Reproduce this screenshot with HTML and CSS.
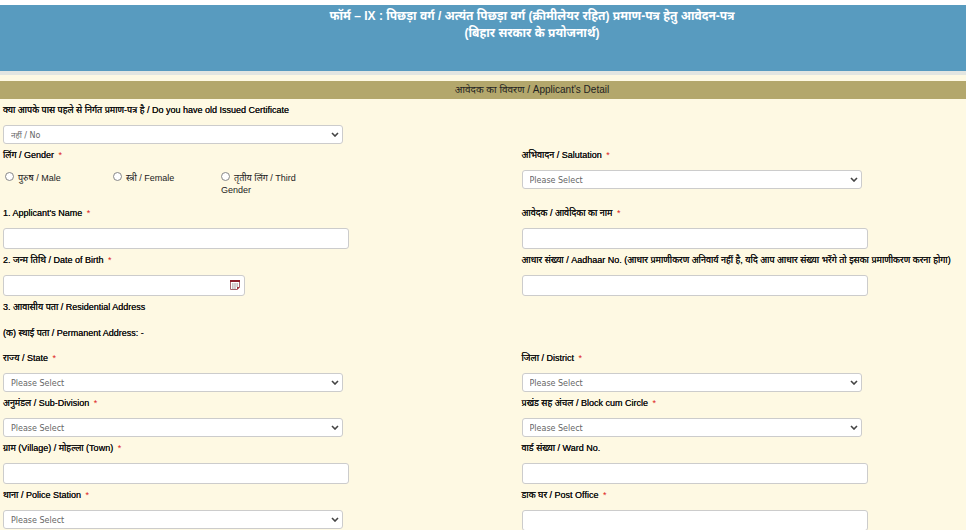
FILE: index.html
```html
<!DOCTYPE html>
<html lang="hi">
<head>
    <meta charset="UTF-8">
    <meta name="viewport" content="width=device-width, initial-scale=1.0">
    <title>Form IX</title>
    <link rel="stylesheet" href="styles.css">
</head>
<body>
    <div class="top-strip"></div>
    <header class="form-header">
        <h1>फॉर्म – IX : पिछड़ा वर्ग / अत्यंत पिछड़ा वर्ग (क्रीमीलेयर रहित) प्रमाण-पत्र हेतु आवेदन-पत्र<br>(बिहार सरकार के प्रयोजनार्थ)</h1>
    </header>
    <h2 class="section-title">आवेदक का विवरण / Applicant's Detail</h2>

    <form class="form">
        <div class="row">
            <div class="field">
                <label for="old-cert">क्या आपके पास पहले से निर्गत प्रमाण-पत्र है / Do you have old Issued Certificate</label>
                <select id="old-cert"><option>नहीं / No</option></select>
            </div>
        </div>
        <div class="row">
            <div class="field" role="radiogroup" aria-labelledby="gender-label">
                <span class="label" id="gender-label">लिंग / Gender <span class="req">*</span></span>
                <div class="radios">
                    <label><input type="radio" name="gender">पुरुष / Male</label>
                    <label><input type="radio" name="gender">स्त्री / Female</label>
                    <label><input type="radio" name="gender">तृतीय लिंग / Third Gender</label>
                </div>
            </div>
            <div class="field">
                <label for="salutation">अभिवादन / Salutation <span class="req">*</span></label>
                <select id="salutation"><option>Please Select</option></select>
            </div>
        </div>
        <div class="row">
            <div class="field">
                <label for="name-en">1. Applicant's Name <span class="req">*</span></label>
                <input type="text" id="name-en">
            </div>
            <div class="field">
                <label for="name-hi">आवेदक / आवेदिका का नाम <span class="req">*</span></label>
                <input type="text" id="name-hi">
            </div>
        </div>
        <div class="row">
            <div class="field">
                <label for="dob">2. जन्म तिथि / Date of Birth <span class="req">*</span></label>
                <div class="date-box">
                    <input type="text" id="dob">
                    <svg class="calendar" viewBox="0 0 10 10" aria-hidden="true">
                        <path d="M0.5 1.5V9.5H7L9.5 7V1.5Z" fill="#fff" stroke="#a5646c"/>
                        <path d="M0 0H10V2H0Z" fill="#8c1f2b"/>
                        <path d="M2 4H8M2 6H8M2 8H6" stroke="#8f8388" stroke-dasharray="1.6 0.6"/>
                        <path d="M7 10V7H10Z" fill="#a3313c"/>
                    </svg>
                </div>
            </div>
            <div class="field">
                <label for="aadhaar">आधार संख्या / Aadhaar No. (आधार प्रमाणीकरण अनिवार्य नहीं है, यदि आप आधार संख्या भरेंगे तो इसका प्रमाणीकरण करना होगा)</label>
                <input type="text" id="aadhaar">
            </div>
        </div>
        <div class="headings">
            <h3>3. आवासीय पता / Residential Address</h3>
            <h3>(क) स्थाई पता / Permanent Address: -</h3>
        </div>
        <div class="row">
            <div class="field">
                <label for="state">राज्य / State <span class="req">*</span></label>
                <select id="state"><option>Please Select</option></select>
            </div>
            <div class="field">
                <label for="district">जिला / District <span class="req">*</span></label>
                <select id="district"><option>Please Select</option></select>
            </div>
        </div>
        <div class="row">
            <div class="field">
                <label for="subdivision">अनुमंडल / Sub-Division <span class="req">*</span></label>
                <select id="subdivision"><option>Please Select</option></select>
            </div>
            <div class="field">
                <label for="block">प्रखंड सह अंचल / Block cum Circle <span class="req">*</span></label>
                <select id="block"><option>Please Select</option></select>
            </div>
        </div>
        <div class="row">
            <div class="field">
                <label for="village">ग्राम (Village) / मोहल्ला (Town) <span class="req">*</span></label>
                <input type="text" id="village">
            </div>
            <div class="field">
                <label for="ward">वार्ड संख्या / Ward No.</label>
                <input type="text" id="ward">
            </div>
        </div>
        <div class="row">
            <div class="field">
                <label for="police">थाना / Police Station <span class="req">*</span></label>
                <select id="police"><option>Please Select</option></select>
            </div>
            <div class="field">
                <label for="post">डाक घर / Post Office <span class="req">*</span></label>
                <input type="text" id="post">
            </div>
        </div>
    </form>
</body>
</html>
```
FILE: styles.css
```css
* {
    box-sizing: border-box;
}
html {
    overflow: hidden;
}
body {
    margin: 0;
    background-color: #fef9e3;
    color: #222;
    font-family: "Liberation Sans", "Noto Sans Devanagari", "Noto Sans", sans-serif;
    font-size: 9px;
}
h1, h2, h3 {
    margin: 0;
}
.top-strip {
    height: 5px;
    background-color: #fff;
}
.form-header {
    height: 70px;
    padding: 3px 0 0 98px;
    background-color: #589bbf;
    border-bottom: 4px solid #e3e6e1;
    color: #fff;
    text-align: center;
}
.form-header h1 {
    font-size: 12px;
    line-height: 17px;
}
.section-title {
    margin-top: 6px;
    padding-left: 98px;
    background-color: #b3a76c;
    font-size: 10px;
    font-weight: normal;
    line-height: 18px;
    text-align: center;
}
.form {
    padding-left: 3px;
}
.row {
    display: grid;
    grid-template-columns: 7fr 6fr;
}
.field {
    min-width: 0;
}
.field > label, .label, .headings h3 {
    display: block;
    height: 20px;
    margin-bottom: 6px;
    color: #111;
    font-size: 9px;
    font-weight: normal;
    line-height: 22px;
    text-shadow: 0 0 0 #111;
    white-space: nowrap;
}
.headings h3:last-child {
    margin-bottom: 5px;
}
.req {
    margin-left: 2px;
    color: #d22;
    text-shadow: none;
}
input[type="text"], select {
    display: block;
    max-width: 100%;
    border: 1px solid #ccc;
    border-radius: 3px;
    background-color: #fff;
    color: #666;
    font-family: "DejaVu Sans", "Noto Sans Devanagari", "Noto Sans", sans-serif;
    font-size: 8px;
}
input[type="text"] {
    width: 346px;
    height: 21px;
    padding: 0 8px;
}
select {
    width: 340px;
    height: 19px;
    padding: 2px 20px 0 7px;
    appearance: none;
    background-image: url("data:image/svg+xml,%3Csvg xmlns='http://www.w3.org/2000/svg' viewBox='0 0 8 5'%3E%3Cpath d='M1 1L4 4L7 1' fill='none' stroke='%23444' stroke-width='1.6'/%3E%3C/svg%3E");
    background-repeat: no-repeat;
    background-position: right 3px center;
    background-size: 8px 5px;
}
.radios {
    display: grid;
    grid-template-columns: repeat(3, 88px);
    column-gap: 20px;
    min-height: 32px;
    padding: 2px 0 0 2px;
    line-height: 12px;
}
.radios input {
    appearance: none;
    width: 9px;
    height: 9px;
    margin: 0 4px 0 0;
    border: 1px solid #888;
    border-radius: 50%;
    background-color: #fff;
}
.date-box {
    position: relative;
    width: 242px;
}
.calendar {
    position: absolute;
    top: 5px;
    right: 5px;
    width: 10px;
    height: 10px;
}
```
